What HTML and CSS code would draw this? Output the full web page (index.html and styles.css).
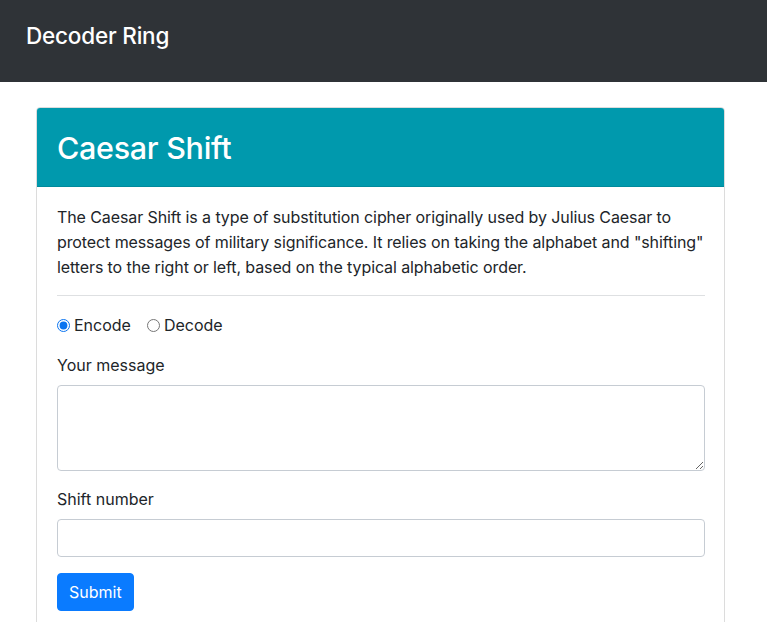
FILE: index.html
```html
<!DOCTYPE html>
<html lang="en">
<head>
<meta charset="utf-8">
<title>Decoder Ring</title>
<link rel="stylesheet" href="styles.css">
</head>
<body>
<nav class="navbar">
  <span class="brand">Decoder Ring</span>
</nav>
<main class="container">
  <section class="card">
    <header class="card-header">
      <h2 class="card-title">Caesar Shift</h2>
    </header>
    <div class="card-body">
      <p class="intro">The Caesar Shift is a type of substitution cipher originally used by Julius Caesar to protect messages of military significance. It relies on taking the alphabet and "shifting" letters to the right or left, based on the typical alphabetic order.</p>
      <hr class="divider">
      <form class="form">
        <div class="radios">
          <label class="radio"><input type="radio" name="mode" checked> <span>Encode</span></label>
          <label class="radio"><input type="radio" name="mode"> <span>Decode</span></label>
        </div>
        <div class="group">
          <label class="label" for="msg">Your message</label>
          <textarea id="msg" class="control textarea"></textarea>
        </div>
        <div class="group">
          <label class="label" for="shift">Shift number</label>
          <input id="shift" type="number" class="control input">
        </div>
        <button type="button" class="btn">Submit</button>
      </form>
    </div>
  </section>
</main>
</body>
</html>
```
FILE: styles.css
```css
* { box-sizing: border-box; }
html, body { margin: 0; padding: 0; }
body {
  font-family: Inter, "Liberation Sans", sans-serif;
  font-size: 16px;
  line-height: 1.5;
  color: #212529;
  background: #fff;
}
.navbar {
  background: #2f3337;
  height: 82px;
  display: flex;
  align-items: flex-start;
  padding: 20px 26px 0;
}
.brand {
  color: #fff;
  font-size: 22.5px;
  line-height: 32px;
  font-weight: 500;
  letter-spacing: -0.2px;
}
.container {
  padding: 25px 42px 0 36px;
}
.card {
  border: 1px solid #dcdcdc;
  border-radius: 4px;
  overflow: hidden;
}
.card-header {
  background: #0099ad;
  border-bottom: 1px solid #008a9c;
  height: 79px;
  display: flex;
  align-items: center;
  padding: 2px 20px 0;
}
.card-title {
  margin: 0;
  color: #fff;
  font-size: 30.5px;
  font-weight: 500;
  letter-spacing: -0.3px;
}
.card-body {
  padding: 18px 19px 20px 20px;
}
.intro {
  margin: 0;
  font-size: 16px;
  line-height: 25px;
  letter-spacing: -0.1px;
}
.divider {
  border: 0;
  border-top: 1px solid #dee0e2;
  margin: 15px 0 14px;
}
.radios {
  display: flex;
  gap: 16px;
  height: 30px;
  align-items: center;
}
.radio {
  display: flex;
  align-items: center;
  gap: 4px;
}
.radio input {
  margin: 0;
  width: 13px;
  height: 13px;
  accent-color: #0a74f0;
}
.group { margin-top: 13px; }
.group + .group { margin-top: 16px; }
.label {
  display: block;
  margin-bottom: 8px;
}
.control {
  display: block;
  width: 100%;
  border: 1px solid #c6ccd3;
  border-radius: 4px;
  font: inherit;
  padding: 6px 12px;
}
.textarea { height: 86px; resize: vertical; margin-bottom: 0; }
.input { height: 38px; margin-bottom: 16px; }
.btn {
  background: #0a7bff;
  color: #fff;
  border: 1px solid #0a7bff;
  border-radius: 4px;
  font: inherit;
  height: 38px;
  padding: 0 11px;
}
```
